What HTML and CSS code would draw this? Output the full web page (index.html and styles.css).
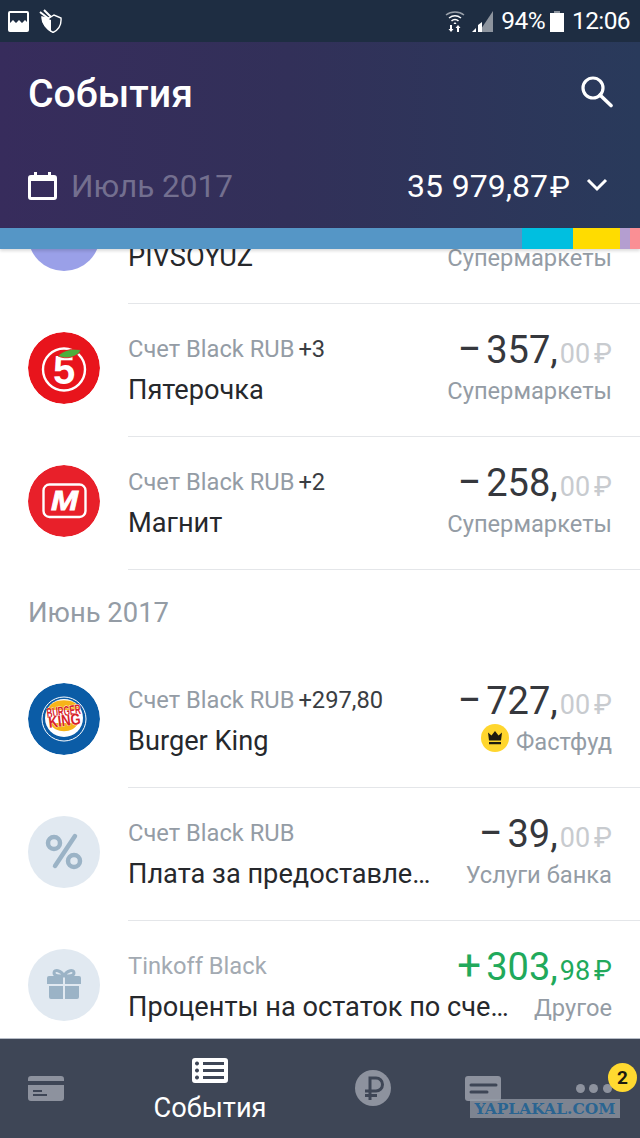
FILE: index.html
```html
<!DOCTYPE html>
<html lang="ru">
<head>
<meta charset="utf-8">
<title>События</title>
<link rel="stylesheet" href="styles.css">
</head>
<body>
<div class="app">
  <div class="status">
    <svg class="st-img" viewBox="0 0 21 21"><path fill="#fff" fill-rule="evenodd" d="M2 0h17a2 2 0 0 1 2 2v17a2 2 0 0 1-2 2H2a2 2 0 0 1-2-2V2a2 2 0 0 1 2-2zM2 2v10l3-3 3 3 3-3 3 3 3-3 2 2V2z"/></svg>
    <svg class="st-shield" viewBox="0 0 24 24"><path fill="none" stroke="#fff" stroke-width="1.400" d="M3 8l4 1 3 0 5-3 7 3c.5 6-2 11.500-8 14.500C8 20.500 2.500 14 3 8z"/><path fill="#fff" d="M3 8l4 1 5 2v12C7 20 2.500 14 3 8z"/><path d="M1 3l9 7M5 1l7 7" fill="none" stroke="#fff" stroke-width="2"/></svg>
    <div class="st-right">
      <svg class="st-wifi" viewBox="0 0 20 22"><g fill="none" stroke="#fff" stroke-width="1.500"><path stroke-opacity=".55" d="M1 5c5-4 13-4 18 0"/><path d="M4 8c4-3 8-3 12 0"/><path d="M6.500 11c2-2 5-2 7 0"/></g><path fill="#fff" d="M10 12l1.500 2h-3zM5 15h2v4h1.500L6 22l-2.500-3H5zM13 15l2.500 3H14v4h-2v-4h-1.500z"/></svg>
      <svg class="st-signal" viewBox="0 0 21 21"><path fill="#8d949e" d="M21 0v21H7z"/><path fill="#fff" d="M0 21l4-4v4zM6 21v-7l4-3v10z"/></svg>
      <span class="st-text">94%</span>
      <svg class="st-batt" viewBox="0 0 14 21"><path fill="#8d949e" d="M4 0h6v2h-6z"/><path fill="#fff" d="M0 2h14v19H0z"/></svg>
      <span class="st-text st-time">12:06</span>
    </div>
  </div>

  <header class="head">
    <div class="head-top">
      <h1 class="title">События</h1>
      <svg class="search" viewBox="0 0 32 32"><circle cx="12" cy="12" r="10" fill="none" stroke="#fff" stroke-width="3.200"/><path d="M19 19l11 10.500" stroke="#fff" stroke-width="3.600" stroke-linecap="round"/></svg>
    </div>
    <div class="head-bottom">
      <svg class="cal" viewBox="0 0 29 28"><path fill="#fff" fill-rule="evenodd" d="M6 0h3v3h11V0h3v3h3a3 3 0 0 1 3 3v19a3 3 0 0 1-3 3H3a3 3 0 0 1-3-3V6a3 3 0 0 1 3-3h3zM3 9v16h23V9z"/></svg>
      <span class="period">Июль 2017</span>
      <span class="total">35 979,87<span class="total-cur">₽</span></span>
      <svg class="chev" viewBox="0 0 22 14"><path d="M2 2l9 9 9-9" fill="none" stroke="#fff" stroke-width="3"/></svg>
    </div>
  </header>

  <div class="bar">
    <span class="seg seg-blue"></span>
    <span class="seg seg-cyan"></span>
    <span class="seg seg-yellow"></span>
    <span class="seg seg-purple"></span>
    <span class="seg seg-pink"></span>
  </div>

  <main class="list">
    <div class="row row-clipped">
      <div class="icon icon-lilac"><span class="lilac-mark"></span></div>
      <div class="row-body">
        <div class="col-left"><div class="label">&nbsp;</div><div class="name">PIVSOYUZ</div></div>
        <div class="col-right"><div class="amount">&nbsp;</div><div class="cat">Супермаркеты</div></div>
      </div>
    </div>

    <div class="row">
      <div class="icon">
        <svg viewBox="0 0 72 72"><circle cx="36" cy="36" r="36" fill="#e8141c"/><circle cx="36" cy="37.500" r="21" fill="none" stroke="#fff" stroke-width="2.400"/><text x="36" y="52" class="logo-five">5</text><path d="M30 24c5-6 15-8 23-6-3 7-15 10-23 6z" fill="#4caf3c" stroke="#e8141c" stroke-width=".8"/></svg>
      </div>
      <div class="row-body">
        <div class="col-left"><div class="label">Счет Black RUB<span class="plus">+3</span></div><div class="name">Пятерочка</div></div>
        <div class="col-right"><div class="amount"><span class="sign">−</span>357,<span class="cents">00<span class="cur">₽</span></span></div><div class="cat">Супермаркеты</div></div>
      </div>
    </div>

    <div class="row">
      <div class="icon">
        <svg viewBox="0 0 72 72"><circle cx="36" cy="36" r="36" fill="#e8202a"/><rect x="15.500" y="19.500" width="42" height="32.500" rx="6" fill="none" stroke="#fff" stroke-width="2.400"/><text x="23" y="45" class="logo-m" textLength="27" lengthAdjust="spacingAndGlyphs">М</text></svg>
      </div>
      <div class="row-body">
        <div class="col-left"><div class="label">Счет Black RUB<span class="plus">+2</span></div><div class="name">Магнит</div></div>
        <div class="col-right"><div class="amount"><span class="sign">−</span>258,<span class="cents">00<span class="cur">₽</span></span></div><div class="cat">Супермаркеты</div></div>
      </div>
    </div>

    <div class="month">Июнь 2017</div>

    <div class="row">
      <div class="icon">
        <svg viewBox="0 0 72 72"><circle cx="36" cy="36" r="36" fill="#0b5ca6"/><circle cx="36" cy="36" r="22" fill="none" stroke="#fff" stroke-width="1"/><circle cx="36" cy="35" r="19" fill="#fff"/><path d="M20 27c2-13 30-13 32 0zM22 40h28c-4 11-24 11-28 0z" fill="#f7b418"/><text transform="rotate(-7 36 31)" x="19" y="33" class="logo-bk" font-size="14" textLength="34" lengthAdjust="spacingAndGlyphs">BURGER</text><text transform="rotate(-7 36 41)" x="21" y="43" class="logo-bk" font-size="16" textLength="32" lengthAdjust="spacingAndGlyphs">KING</text></svg>
      </div>
      <div class="row-body">
        <div class="col-left"><div class="label">Счет Black RUB<span class="plus">+297,80</span></div><div class="name">Burger King</div></div>
        <div class="col-right"><div class="amount"><span class="sign">−</span>727,<span class="cents">00<span class="cur">₽</span></span></div>
          <div class="cat cat-crown"><svg class="crown" viewBox="0 0 28 28"><circle cx="14" cy="14" r="14" fill="#ffd62e"/><path d="M7 8.500l3.500 3L14 7l3.500 4.500 3.500-3-1 8H8zM8 18h12v2.200H8z" fill="#1d1b10"/></svg>Фастфуд</div></div>
      </div>
    </div>

    <div class="row">
      <div class="icon icon-soft">
        <svg viewBox="0 0 72 72"><g fill="none" stroke="#9bb3c6" stroke-width="4.500"><circle cx="26" cy="27" r="6"/><circle cx="46" cy="45" r="6"/></g><path d="M47 20L27 50" stroke="#9bb3c6" stroke-width="4.500" stroke-linecap="round"/></svg>
      </div>
      <div class="row-body">
        <div class="col-left"><div class="label">Счет Black RUB</div><div class="name">Плата за предоставле…</div></div>
        <div class="col-right"><div class="amount"><span class="sign">−</span>39,<span class="cents">00<span class="cur">₽</span></span></div><div class="cat">Услуги банка</div></div>
      </div>
    </div>

    <div class="row">
      <div class="icon icon-soft">
        <svg viewBox="0 0 72 72"><g fill="#9bb3c6"><path d="M19 29a2 2 0 0 1 2-2h14v8H19zM37 27h14a2 2 0 0 1 2 2v6H37zM21 37h14v13H23a2 2 0 0 1-2-2zM37 37h14v11a2 2 0 0 1-2 2H37z"/></g><g fill="none" stroke="#9bb3c6" stroke-width="3"><path d="M36 27c-3-6-10-7-10-3 0 3 5 3 10 3zM36 27c3-6 10-7 10-3 0 3-5 3-10 3z"/></g></svg>
      </div>
      <div class="row-body">
        <div class="col-left"><div class="label label-light">Tinkoff Black</div><div class="name">Проценты на остаток по сче…</div></div>
        <div class="col-right"><div class="amount amount-green"><span class="sign">+</span>303,<span class="cents">98<span class="cur">₽</span></span></div><div class="cat">Другое</div></div>
      </div>
    </div>
  </main>

  <nav class="tabs">
    <div class="tab">
      <svg class="ti-card" viewBox="0 0 36 25"><path fill="#8d929e" fill-rule="evenodd" d="M3 0h30a3 3 0 0 1 3 3v2H0V3a3 3 0 0 1 3-3zM0 9h36v13a3 3 0 0 1-3 3H3a3 3 0 0 1-3-3zM5 14v2h9v-2zM5 18v2h14v-2z"/></svg>
    </div>
    <div class="tab tab-active">
      <svg class="ti-list" viewBox="0 0 36 25"><path fill="#fff" fill-rule="evenodd" d="M3 0h30a3 3 0 0 1 3 3v19a3 3 0 0 1-3 3H3a3 3 0 0 1-3-3V3a3 3 0 0 1 3-3zM5 3.500a2 2 0 1 0 .01 0zM11 4v3h21V4zM5 10.500a2 2 0 1 0 .01 0zM11 11v3h21v-3zM5 17.500a2 2 0 1 0 .01 0zM11 18v3h21v-3z"/></svg>
      <span class="tab-label">События</span>
    </div>
    <div class="tab">
      <svg class="ti-rub" viewBox="0 0 36 36"><circle cx="18" cy="18" r="18" fill="#8d929e"/><path d="M15 30V8h6a6 6 0 0 1 0 13H10M10 25.500h12" fill="none" stroke="#3e4656" stroke-width="3"/></svg>
    </div>
    <div class="tab">
      <svg class="ti-chat" viewBox="0 0 36 25"><path fill="#8d929e" fill-rule="evenodd" d="M3 0h30a3 3 0 0 1 3 3v19a3 3 0 0 1-3 3H3a3 3 0 0 1-3-3V3a3 3 0 0 1 3-3z"/><path d="M6 9h25M6 16h16" stroke="#3e4656" stroke-width="3" stroke-linecap="round"/></svg>
    </div>
    <div class="tab">
      <div class="dots"><i></i><i></i><i></i></div>
    </div>
    <span class="badge">2</span>
    <span class="watermark">YAPLAKAL.COM</span>
  </nav>
</div>
</body>
</html>
```

FILE: styles.css
```css
* { box-sizing: border-box; }
html, body { margin: 0; padding: 0; }
body { font-family: Roboto, "Noto Sans", sans-serif; background: #fff; }
.app { width: 640px; height: 1138px; display: flex; flex-direction: column; overflow: hidden; }

.status { height: 42px; flex: none; background: #1e2d42; display: flex; align-items: center; padding: 0 10px 0 8px; }
.st-img { width: 21px; height: 21px; }
.st-shield { width: 24px; height: 24px; margin-left: 10px; }
.st-right { margin-left: auto; display: flex; align-items: center; }
.st-wifi { width: 20px; height: 22px; margin-right: 7px; }
.st-signal { width: 21px; height: 21px; margin-right: 8px; }
.st-text { color: #fff; font-size: 24.500px; letter-spacing: -0.6px; line-height: 42px; }
.st-batt { width: 14px; height: 21px; margin: 0 8px 0 5px; }

.head { height: 186px; flex: none; background: linear-gradient(90deg, #372c5c 0%, #323059 45%, #293a5b 100%); padding: 0 28px; display: flex; flex-direction: column; }
.head-top { height: 104px; display: flex; align-items: center; justify-content: space-between; }
.title { margin: 0; font-size: 39.200px; font-weight: 500; color: #fff; line-height: 44px; }
.search { width: 32px; height: 32px; margin: -4px -1px 0 0; }
.head-bottom { display: flex; align-items: center; height: 80px; }
.cal { width: 29px; height: 28px; }
.period { margin-left: 14px; font-size: 31.500px; color: #736f8f; }
.total { margin-left: auto; font-size: 32px; color: #fff; word-spacing: 1px; }
.total-cur { margin-left: 2px; font-size: 30px; }
.chev { width: 22px; height: 14px; margin: -2px 4px 0 16px; }

.bar { height: 21px; flex: none; display: flex; position: relative; z-index: 1; box-shadow: 0 2px 3px rgba(0, 0, 0, .14); }
.seg { display: block; height: 100%; }
.seg-blue { width: 522px; background: #5596c6; }
.seg-cyan { width: 51px; background: #00bfe0; }
.seg-yellow { width: 47px; background: #ffdc00; }
.seg-purple { width: 10px; background: #b49ed0; }
.seg-pink { width: 10px; background: #fa8f94; }

.list { flex: 1; min-height: 0; overflow: hidden; background: #fff; }
.row { height: 133px; display: flex; padding: 29px 0 0 28px; }
.row-clipped { margin-top: -79px; }
.icon { width: 72px; height: 72px; flex: none; border-radius: 50%; overflow: hidden; }
.icon svg { display: block; width: 72px; height: 72px; }
.icon-soft { background: #e1e9f1; }
.icon-lilac { background: #9aa0e8; display: flex; justify-content: center; align-items: flex-end; }
.lilac-mark { width: 26px; height: 3px; margin-bottom: 26px; background: #c5c8f3; }
.row-body { flex: 1; min-width: 0; margin: -29px 0 0 28px; padding: 27px 28px 0 0; height: 134px; border-bottom: 1px solid #e4e6e9; display: flex; justify-content: space-between; }
.col-left { flex: 1; min-width: 0; }
.label { font-size: 23.700px; line-height: 38px; color: #949ca5; white-space: nowrap; }
.label-light { color: #a3aab2; }
.plus { color: #3a3d42; margin-left: 4px; }
.name { font-size: 27.200px; line-height: 44px; color: #26282c; white-space: nowrap; }
.col-right { flex: none; padding-top: 1px; text-align: right; white-space: nowrap; }
.amount { font-size: 38px; line-height: 38px; color: #36383d; }
.amount-green { color: #21a95b; }
.sign { margin-right: 5px; font-size: 42px; line-height: 0; }
.cents { font-size: 27px; line-height: 0; color: #c8cbcf; margin-left: 2px; }
.cur { margin-left: 4px; font-size: 27px; }
.amount-green .cents { color: #21a95b; }
.cat { font-size: 23.700px; line-height: 44px; color: #949ca5; display: flex; justify-content: flex-end; align-items: center; }
.crown { width: 28px; height: 28px; margin: -8px 7px 0 0; }
.month { height: 85px; padding: 24px 0 0 28px; font-size: 27.400px; line-height: 40px; color: #949ca5; }

.logo-five { font-family: "Liberation Sans", sans-serif; font-size: 40px; font-weight: 700; fill: #fff; text-anchor: middle; }
.logo-m { font-family: "Liberation Sans", sans-serif; font-size: 27px; font-weight: 700; font-style: italic; fill: #fff; stroke: #fff; stroke-width: .8px; }
.logo-bk { font-family: "Liberation Sans", sans-serif; font-weight: 700; fill: #d8232a; stroke: #fff; stroke-width: .7px; paint-order: stroke; }

.tabs { height: 100px; flex: none; background: #3e4656; border-top: 1px solid #b6bcc6; display: grid; grid-template-columns: 92px 236px 90px 130px 92px; position: relative; }
.tab { display: flex; flex-direction: column; align-items: center; justify-content: center; }
.ti-card, .ti-chat { width: 36px; height: 25px; margin-top: -1px; }
.ti-rub { width: 36px; height: 36px; margin-top: -2px; }
.tab-active { justify-content: flex-start; padding-top: 19px; }
.ti-list { width: 36px; height: 25px; }
.tab-label { font-size: 27.200px; line-height: 32px; color: #fff; margin-top: 9px; }
.dots { display: flex; gap: 4.500px; margin: -1px 0 0 -1px; }
.dots i { display: block; width: 9px; height: 9px; border-radius: 50%; background: #8d929e; }
.badge { position: absolute; left: 608px; top: 24px; width: 29px; height: 29px; border-radius: 50%; background: #ffd930; color: #1d1b10; font-size: 19px; font-weight: 700; line-height: 29px; text-align: center; }
.watermark { position: absolute; left: 470px; top: 60px; width: 150px; height: 19px; background: rgba(150, 156, 168, .72); color: #2a6491; font-family: "DejaVu Serif", serif; font-size: 15.500px; font-weight: 700; line-height: 19px; text-align: center; white-space: nowrap; overflow: hidden; }
```
